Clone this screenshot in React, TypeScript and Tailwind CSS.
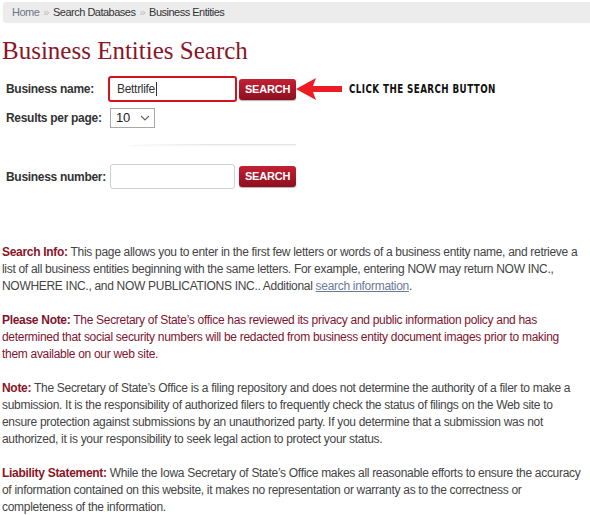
const sans = { fontFamily: '"Liberation Sans", Arial, sans-serif' };

function SearchButton() {
  return (
    <button
      className="h-[21px] w-[57px] rounded-[3px] bg-gradient-to-b from-[#c42034] to-[#8e0f1f] text-[11px] font-bold tracking-[-0.2px] text-white shadow-[0_1px_1px_rgba(0,0,0,0.3)]"
      style={sans}
    >
      SEARCH
    </button>
  );
}

function Arrow() {
  return (
    <svg width="48" height="24" viewBox="0 0 48 24" className="block">
      <polygon points="0,12 20,1 17,9 46,9 46,15 17,15 20,23" fill="#ec1c24" />
    </svg>
  );
}

export default function App() {
  return (
    <div className="w-[590px] h-[515px] overflow-hidden bg-white text-[12px] tracking-[-0.3px] text-[#444]" style={sans}>
      <div className="ml-[3px] mt-[2px] h-[20px] rounded-l-[3px] bg-[#ececec] pl-[9px] text-[11px] leading-[20px] tracking-[-0.5px] shadow-[0_1px_1px_rgba(0,0,0,0.08)]">
        <span className="text-[#6b7785]">Home</span>
        <span className="mx-[4px] text-[#bbb]">»</span>
        <span className="text-[#333]">Search Databases</span>
        <span className="mx-[4px] text-[#bbb]">»</span>
        <span className="text-[#333]">Business Entities</span>
      </div>

      <h1
        className="mt-[14px] ml-[2px] text-[25px] leading-[30px] tracking-normal text-[#8a1526]"
        style={{ fontFamily: '"Liberation Serif", Georgia, serif' }}
      >
        Business Entities Search
      </h1>

      <div className="mt-[10px] ml-[6px] flex flex-col">
        <div className="flex items-center">
          <span className="w-[102px] whitespace-nowrap font-bold text-[#333]">Business name:</span>
          <div className="flex h-[26px] w-[129px] items-center rounded-[3px] border-2 border-[#d2121f] pl-[7px] text-[12px] text-[#333]">
            Bettrlife<span className="ml-px h-[14px] w-px bg-[#333]" />
          </div>
          <div className="ml-[2px]">
            <SearchButton />
          </div>
          <Arrow />
          <span
            className="ml-[5px] inline-block origin-left scale-x-[0.7] whitespace-nowrap text-[12.5px] font-bold tracking-[0.6px] text-[#111]"
            style={{ fontFamily: '"DejaVu Sans", sans-serif' }}
          >
            CLICK THE SEARCH BUTTON
          </span>
        </div>

        <div className="mt-[6px] flex items-center">
          <span className="w-[104px] whitespace-nowrap font-bold text-[#333]">Results per page:</span>
          <div className="flex h-[20px] w-[45px] items-center justify-between border border-[#a9a9a9] pl-[5px] pr-[4px] text-[13px] text-[#222]">
            10
            <svg width="10" height="6" viewBox="0 0 10 6">
              <path d="M1 1l4 4 4-4" fill="none" stroke="#666" strokeWidth="1.2" />
            </svg>
          </div>
        </div>

        <div className="mt-[16px] ml-[124px] h-px w-[166px] bg-gradient-to-r from-transparent via-[#e4e4e4] to-[#e4e4e4] shadow-[0_1px_2px_rgba(0,0,0,0.06)]" />

        <div className="mt-[19px] flex items-center">
          <span className="w-[104px] whitespace-nowrap font-bold text-[#333]">Business number:</span>
          <div className="h-[25px] w-[125px] rounded-[3px] border border-[#cfcfcf]" />
          <div className="ml-[4px]">
            <SearchButton />
          </div>
        </div>
      </div>

      <div className="mt-[55px] ml-[2px] w-[582px] flex flex-col gap-[17px] leading-[17px]">
        <p>
          <b className="text-[#8a1526]">Search Info:</b> This page allows you to enter in the first few letters or
          words of a business entity name, and retrieve a list of all business entities beginning with the same
          letters. For example, entering NOW may return NOW INC., NOWHERE INC., and NOW PUBLICATIONS INC..
          Additional <a className="text-[#6b7a99] underline">search information</a>.
        </p>
        <p className="text-[#7d1530]">
          <b>Please Note:</b> The Secretary of State’s office has reviewed its privacy and public information policy
          and has determined that social security numbers will be redacted from business entity document images
          prior to making them available on our web site.
        </p>
        <p>
          <b className="text-[#8a1526]">Note:</b> The Secretary of State’s Office is a filing repository and does not
          determine the authority of a filer to make a submission. It is the responsibility of authorized filers to
          frequently check the status of filings on the Web site to ensure protection against submissions by an
          unauthorized party. If you determine that a submission was not authorized, it is your responsibility to
          seek legal action to protect your status.
        </p>
        <p>
          <b className="text-[#8a1526]">Liability Statement:</b> While the Iowa Secretary of State’s Office makes all
          reasonable efforts to ensure the accuracy of information contained on this website, it makes no
          representation or warranty as to the correctness or completeness of the information.
        </p>
      </div>
    </div>
  );
}
